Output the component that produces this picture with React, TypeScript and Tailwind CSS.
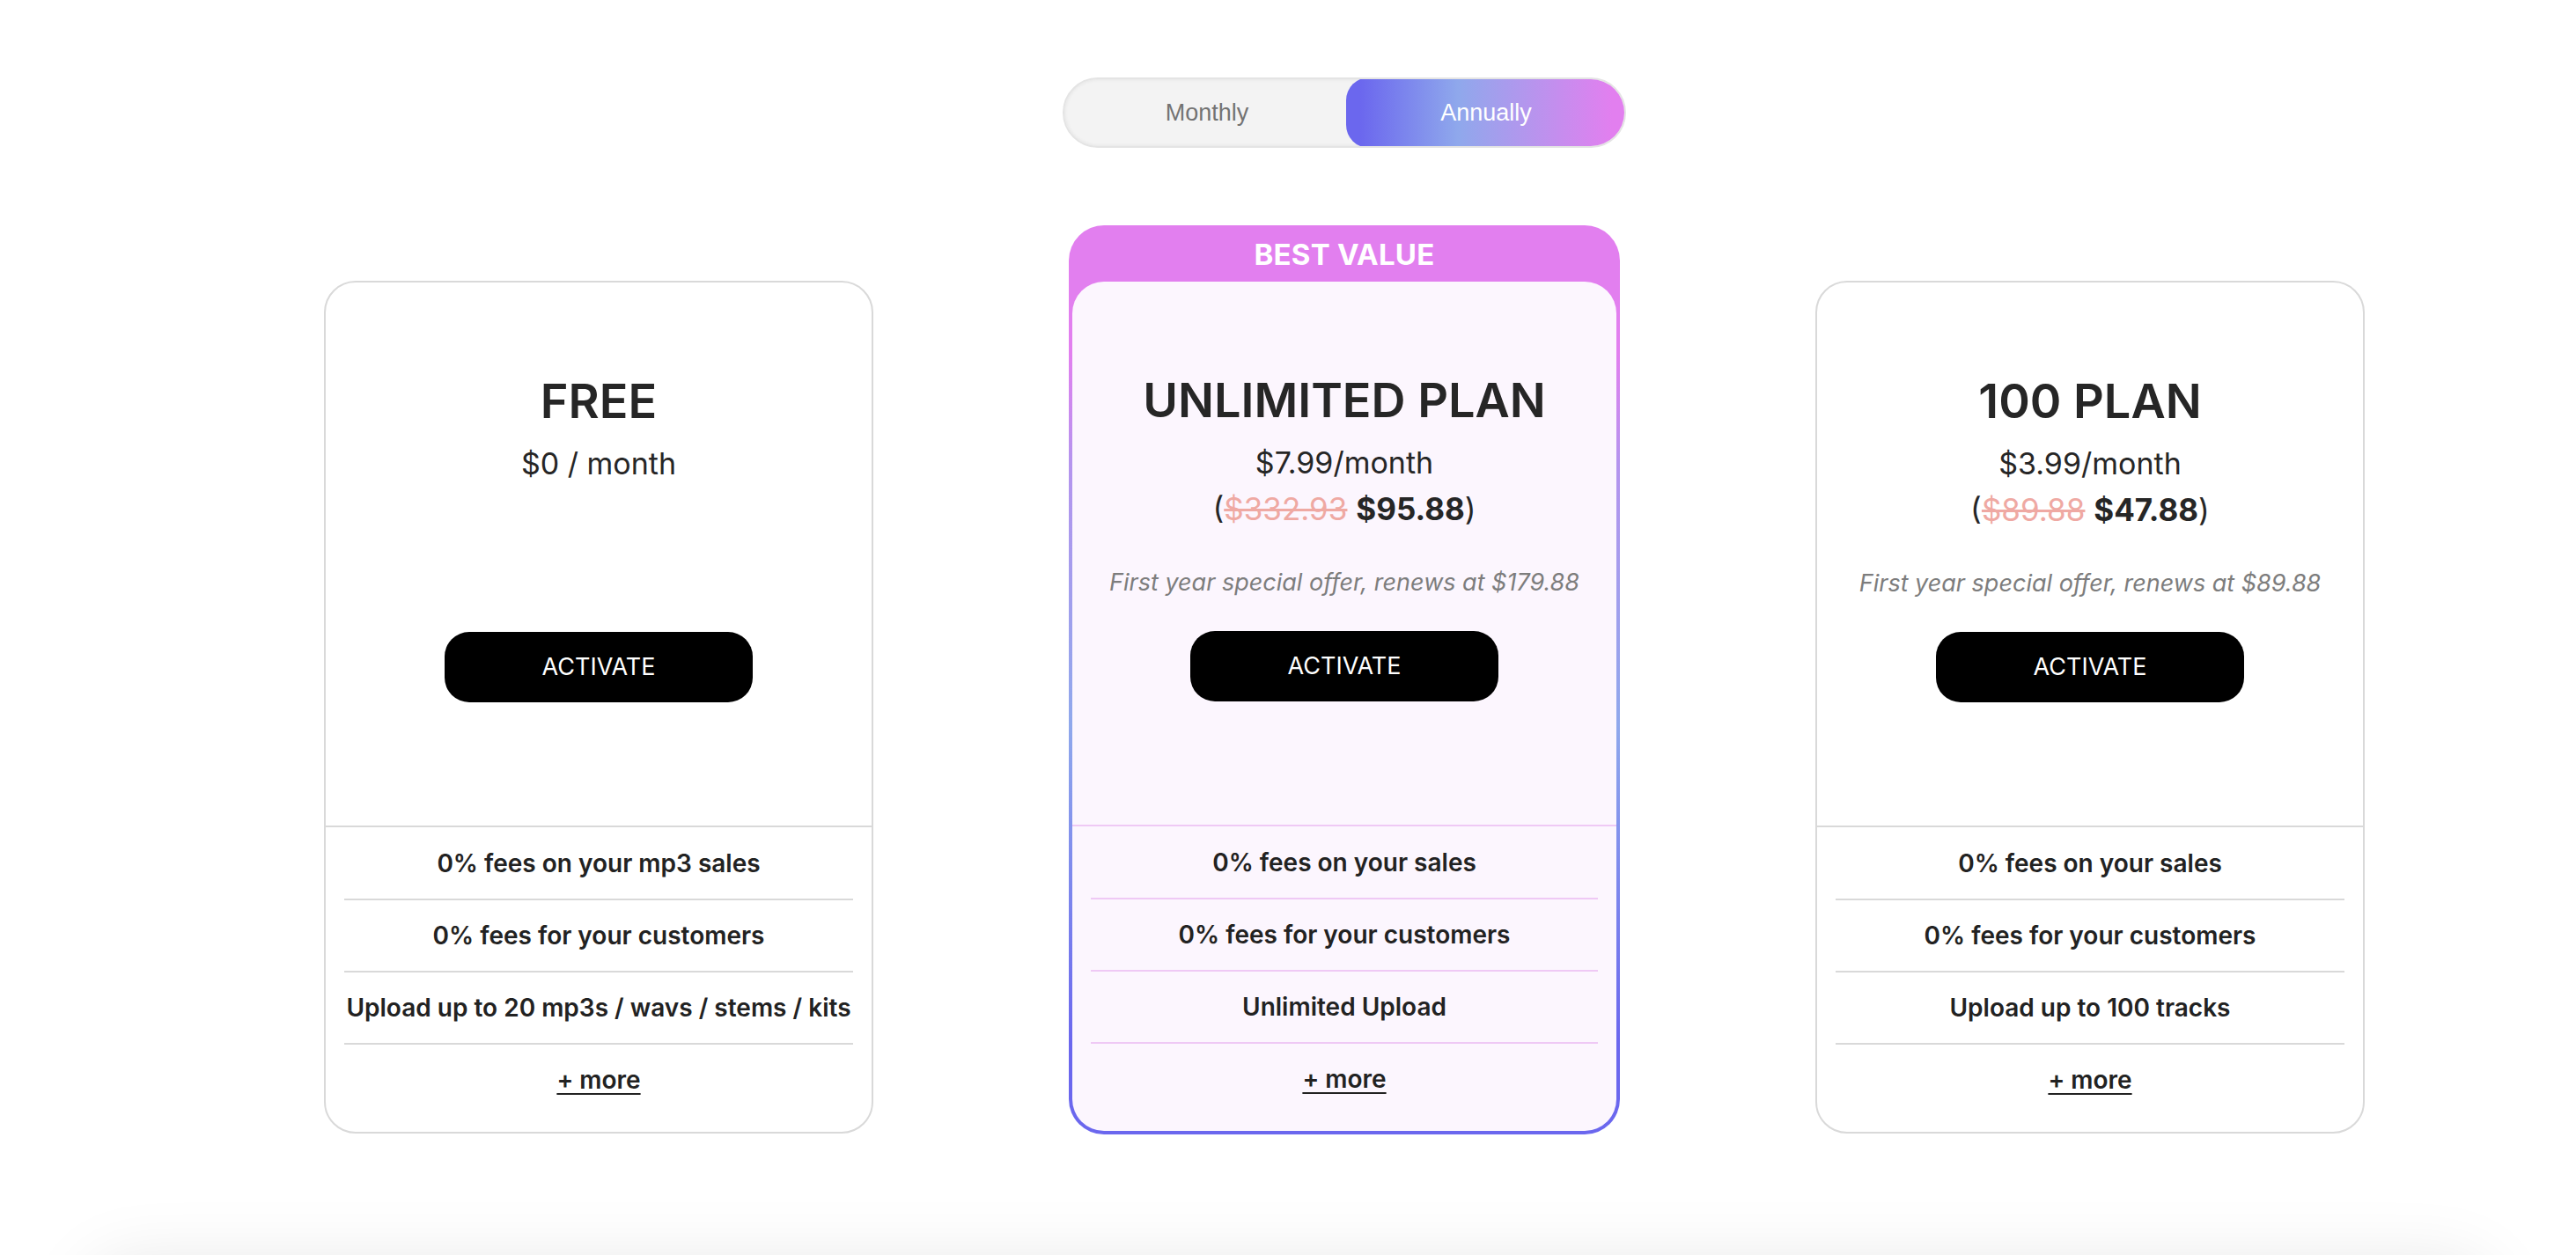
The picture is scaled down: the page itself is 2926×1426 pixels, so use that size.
import React from "react";

type Plan = {
  title: string;
  price: string;
  oldPrice?: string;
  newPrice?: string;
  note?: string;
  features: string[];
};

const plans: Plan[] = [
  {
    title: "FREE",
    price: "$0 / month",
    features: [
      "0% fees on your mp3 sales",
      "0% fees for your customers",
      "Upload up to 20 mp3s / wavs / stems / kits",
    ],
  },
  {
    title: "UNLIMITED PLAN",
    price: "$7.99/month",
    oldPrice: "$332.93",
    newPrice: "$95.88",
    note: "First year special offer, renews at $179.88",
    features: ["0% fees on your sales", "0% fees for your customers", "Unlimited Upload"],
  },
  {
    title: "100 PLAN",
    price: "$3.99/month",
    oldPrice: "$89.88",
    newPrice: "$47.88",
    note: "First year special offer, renews at $89.88",
    features: ["0% fees on your sales", "0% fees for your customers", "Upload up to 100 tracks"],
  },
];

function TopSection({ plan }: { plan: Plan }) {
  return (
    <div className="flex h-[617px] flex-col items-center pt-[102px]">
      <h2 className="text-[54px] leading-[65px] font-semibold text-[#262626] whitespace-nowrap">{plan.title}</h2>
      <div className="mt-[13px] flex h-[182px] flex-col items-center">
        <div className="text-[34px] leading-[52px] text-[#262626] whitespace-nowrap">{plan.price}</div>
        {plan.oldPrice && (
          <div className="text-[35px] leading-[52px] text-[#262626] whitespace-nowrap">
            (<span className="text-[#efa9a3] line-through decoration-[#efa9a3]">{plan.oldPrice}</span>{" "}
            <span className="font-bold">{plan.newPrice}</span>)
          </div>
        )}
        {plan.note && (
          <div className="mt-[38px] text-[27px] leading-[40px] italic text-[#7d7d7d] whitespace-nowrap">{plan.note}</div>
        )}
      </div>
      <button className="mt-[35px] flex h-[80px] w-[350px] items-center justify-center rounded-[28px] bg-black text-[27px] text-white">
        ACTIVATE
      </button>
    </div>
  );
}

function Features({ plan, lineColor }: { plan: Plan; lineColor: string }) {
  return (
    <div className="flex flex-col">
      <div className={`h-[2px] ${lineColor}`} />
      {plan.features.map((f, i) => (
        <React.Fragment key={f}>
          <div
            className={`flex ${i === 0 ? "h-[81px]" : "h-[80px]"} items-center justify-center text-[28px] font-semibold text-[#222222] whitespace-nowrap`}
          >
            {f}
          </div>
          <div className={`mx-[21px] h-[2px] ${lineColor}`} />
        </React.Fragment>
      ))}
      <div className="flex h-[80px] items-center justify-center">
        <span className="text-[28px] font-semibold text-[#222222] underline decoration-2 underline-offset-[5px]">
          + more
        </span>
      </div>
      <div className="h-[19px]" />
    </div>
  );
}

function RegularCard({ plan }: { plan: Plan }) {
  return (
    <div className="mt-[63px] w-[624px] shrink-0 overflow-hidden rounded-[36px] border-2 border-[#d9d9d9] bg-white">
      <TopSection plan={plan} />
      <Features plan={plan} lineColor="bg-[#d9d9d9]" />
    </div>
  );
}

function FeaturedCard({ plan }: { plan: Plan }) {
  return (
    <div className="w-[626px] shrink-0 rounded-[40px] bg-[linear-gradient(180deg,#e27fef_0%,#e27fef_14%,#b594ee_26%,#8fa8ec_55%,#6b67ee_90%)] px-[4px] pb-[4px]">
      <div className="flex h-[64px] items-center justify-center pt-[4px] text-[33px] font-bold tracking-[0.2px] text-white">
        BEST VALUE
      </div>
      <div className="overflow-hidden rounded-[36px] bg-[#fcf6fe]">
        <TopSection plan={plan} />
        <Features plan={plan} lineColor="bg-[#efc9f5]" />
      </div>
    </div>
  );
}

export default function App() {
  return (
    <div className="min-h-screen overflow-hidden bg-white font-['Inter',sans-serif] text-[#262626]">
      <div className="flex flex-col items-center pl-[128px] pt-[88px]">
        <div className="flex h-[80px] w-[640px] overflow-hidden rounded-full border-2 border-[#e4e4e4] bg-[#f3f3f3] shadow-[inset_0_0_4px_rgba(0,0,0,0.08)]">
          <div className="flex flex-1 items-center justify-center pl-[4px] font-['Liberation_Sans',sans-serif] text-[27px] text-[#737373]">
            Monthly
          </div>
          <div className="-my-[2px] -mr-[2px] flex w-[318px] items-center justify-center rounded-[26px] bg-[linear-gradient(90deg,#6b67ee_5%,#8fa8ec_40%,#e27fef_95%)] font-['Liberation_Sans',sans-serif] text-[27px] text-white">
            Annually
          </div>
        </div>

        <div className="mt-[88px] flex items-start gap-[222px]">
          <RegularCard plan={plans[0]} />
          <FeaturedCard plan={plans[1]} />
          <RegularCard plan={plans[2]} />
        </div>
      </div>

      <div className="ml-[100px] mr-[96px] mt-[146px] h-[300px] rounded-[48px] bg-white shadow-[0_0_80px_rgba(0,0,0,0.10)]" />
    </div>
  );
}
